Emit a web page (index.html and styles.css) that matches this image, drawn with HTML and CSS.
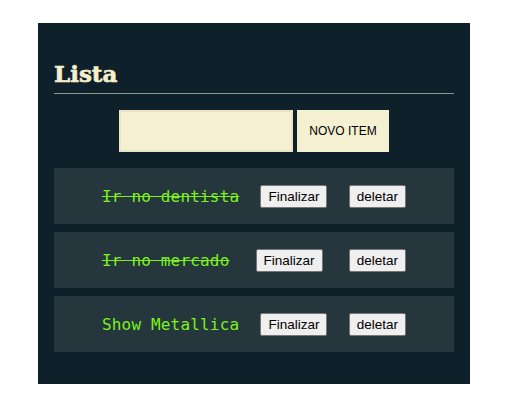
FILE: index.html
```html
<!DOCTYPE html>
<html lang="pt">
<head>
<meta charset="utf-8">
<title>Lista</title>
<link rel="stylesheet" href="styles.css">
</head>
<body>
<main class="panel">
  <h1 class="title">Lista</h1>
  <form class="add-form">
    <input class="add-input" type="text">
    <button class="add-btn" type="button">NOVO ITEM</button>
  </form>
  <ul class="list">
    <li class="row">
      <span class="item done">Ir no dentista</span>
      <button class="btn" type="button">Finalizar</button>
      <button class="btn" type="button">deletar</button>
    </li>
    <li class="row">
      <span class="item done">Ir no mercado</span>
      <button class="btn" type="button">Finalizar</button>
      <button class="btn" type="button">deletar</button>
    </li>
    <li class="row">
      <span class="item">Show Metallica</span>
      <button class="btn" type="button">Finalizar</button>
      <button class="btn" type="button">deletar</button>
    </li>
  </ul>
</main>
</body>
</html>
```
FILE: styles.css
```css
html, body {
  margin: 0;
  padding: 0;
  background: #ffffff;
}

.panel {
  box-sizing: border-box;
  width: 432px;
  margin: 23px 0 0 38px;
  padding: 38px 16px 32px;
  background: #0e2029;
}

.title {
  margin: 0;
  padding-bottom: 6px;
  border-bottom: 1px solid #8b9898;
  font-family: "DejaVu Serif", serif;
  font-weight: bold;
  font-size: 23px;
  line-height: 26px;
  color: #f6efcc;
  -webkit-text-stroke: 0.6px #f6efcc;
}

.add-form {
  display: flex;
  justify-content: center;
  gap: 4px;
  margin: 16px 0 0;
}

.add-input {
  box-sizing: border-box;
  width: 174px;
  height: 42px;
  margin: 0;
  border: 2px solid #ebe4c4;
  background: #f6f0d3;
}

.add-btn {
  box-sizing: border-box;
  width: 92px;
  height: 42px;
  margin: 0;
  border: none;
  background: #f6f0d3;
  font-family: "Liberation Sans", Arial, sans-serif;
  font-size: 12px;
  color: #000000;
}

.list {
  display: flex;
  flex-direction: column;
  gap: 8px;
  list-style: none;
  margin: 16px 0 0;
  padding: 0;
}

.row {
  display: flex;
  justify-content: space-between;
  align-items: center;
  height: 56px;
  padding: 0 48px;
  background: #25363d;
}

.item {
  font-family: "DejaVu Sans Mono", "Liberation Mono", monospace;
  font-size: 16px;
  letter-spacing: 0.17px;
  color: #7cf21c;
}

.item.done {
  text-decoration: line-through;
}

.btn {
  box-sizing: border-box;
  height: 23px;
  margin: 0;
  padding: 3px 7px;
  border: 1px solid #767676;
  border-radius: 2px;
  background: #efefef;
  font-family: "Liberation Sans", Arial, sans-serif;
  font-size: 13.5px;
  line-height: 15px;
  color: #000000;
}
```
